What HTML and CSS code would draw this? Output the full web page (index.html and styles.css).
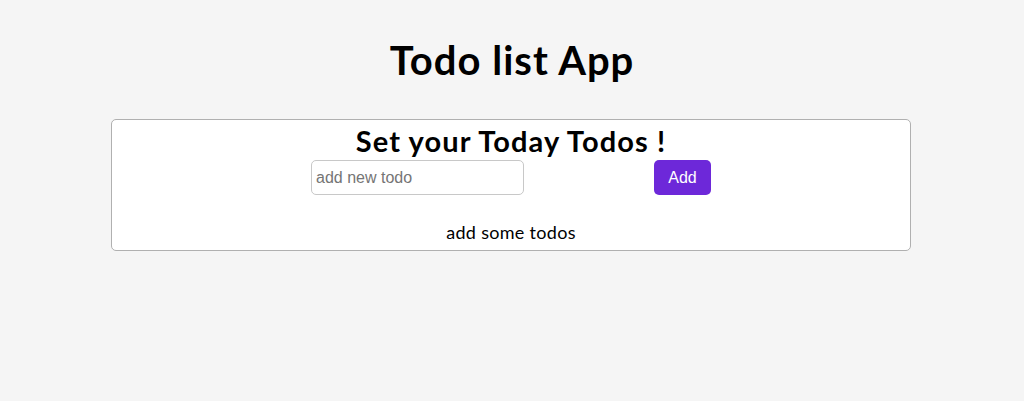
FILE: index.html
```html
<!DOCTYPE html>
<html>
<head>
<meta charset="utf-8">
<link rel="stylesheet" href="styles.css">
</head>
<body>
<h1 class="app-title">Todo list App</h1>
<div class="card">
  <h2 class="card-title">Set your Today Todos !</h2>
  <form class="todo-form">
    <input class="todo-input" type="text" placeholder="add new todo">
    <button class="add-btn" type="button">Add</button>
  </form>
  <p class="empty">add some todos</p>
</div>
</body>
</html>
```
FILE: styles.css
```css
html, body {
  margin: 0;
  padding: 0;
  background: #f5f5f5;
}
body {
  font-family: "Lato", "Noto Sans", sans-serif;
  color: #000;
}
.app-title {
  margin: 0;
  padding-top: 36px;
  height: 83px;
  box-sizing: border-box;
  text-align: center;
  font-size: 40px;
  line-height: 48px;
  font-weight: 700;
  letter-spacing: 1px;
}
.card {
  width: 800px;
  margin: 36px 0 0 calc(50% - 401px);
  background: #fff;
  border: 1px solid #b0b0b0;
  border-radius: 5px;
  box-sizing: border-box;
  height: 132px;
  display: flex;
  flex-direction: column;
  align-items: center;
}
.card-title {
  margin: 4px 0 0;
  font-size: 29px;
  line-height: 34px;
  font-weight: 700;
  letter-spacing: 1.1px;
}
.todo-form {
  width: 400px;
  display: flex;
  justify-content: space-between;
  margin-top: 2px;
}
.todo-input {
  width: 213px;
  height: 35px;
  box-sizing: border-box;
  border: 1px solid #c8c8c8;
  border-radius: 5px;
  padding: 0 4px;
  font-family: "Liberation Sans", Arial, sans-serif;
  font-size: 16px;
  outline: none;
}
.todo-input::placeholder {
  color: #757575;
}
.add-btn {
  width: 57px;
  height: 35px;
  border: none;
  border-radius: 5px;
  background: #6d28d9;
  color: #fff;
  font-family: "Liberation Sans", Arial, sans-serif;
  font-size: 16px;
  padding: 0;
}
.empty {
  margin: 26px 0 0;
  font-size: 18px;
  line-height: 22px;
  letter-spacing: 0.3px;
}
```
